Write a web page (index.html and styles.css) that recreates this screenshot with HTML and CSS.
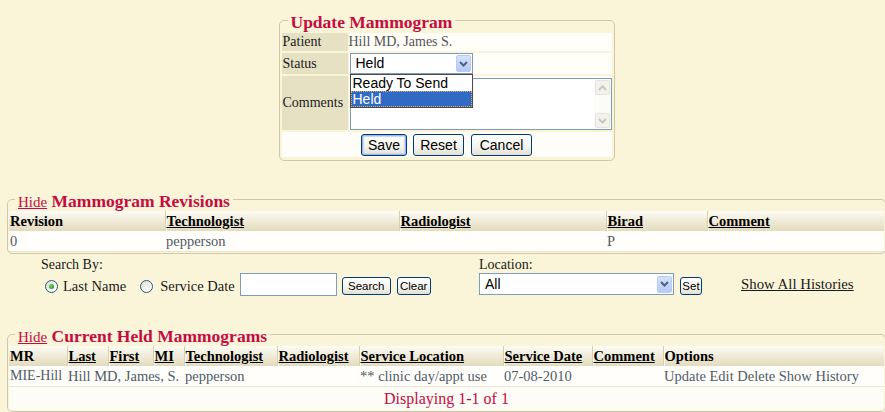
FILE: index.html
```html
<!DOCTYPE html>
<html>
<head>
<meta charset="utf-8">
<title>Mammograms</title>
<link rel="stylesheet" href="styles.css">
</head>
<body>
<div class="page">

  <fieldset class="box update-box">
    <legend class="legend">Update Mammogram</legend>
    <div class="form-grid">
      <div class="lbl">Patient</div>
      <div class="val val-text">Hill MD, James S.</div>

      <div class="lbl">Status</div>
      <div class="val">
        <div class="combo combo-status">
          <span class="combo-text">Held</span>
          <span class="combo-btn"><svg width="9" height="6" viewBox="0 0 9 6"><path d="M1 1l3.5 3.5L8 1" fill="none" stroke="#4d6185" stroke-width="2"/></svg></span>
          <div class="combo-list">
            <div class="opt">Ready To Send</div>
            <div class="opt opt-sel">Held</div>
          </div>
        </div>
      </div>

      <div class="lbl">Comments</div>
      <div class="val">
        <div class="textarea">
          <div class="scrollbar">
            <span class="sb-btn"><svg width="9" height="6" viewBox="0 0 9 6"><path d="M1 5l3.5-3.5L8 5" fill="none" stroke="#c8c7be" stroke-width="2"/></svg></span>
            <span class="sb-btn"><svg width="9" height="6" viewBox="0 0 9 6"><path d="M1 1l3.5 3.5L8 1" fill="none" stroke="#c8c7be" stroke-width="2"/></svg></span>
          </div>
        </div>
      </div>

      <div class="btn-row">
        <button class="btn btn-default btn-save">Save</button>
        <button class="btn btn-reset">Reset</button>
        <button class="btn btn-cancel">Cancel</button>
      </div>
    </div>
  </fieldset>

  <fieldset class="box list-box rev-box">
    <legend class="legend"><a class="hide-link">Hide</a> Mammogram Revisions</legend>
    <table class="grid">
      <colgroup>
        <col class="w156"><col class="w234"><col class="w207"><col class="w101"><col>
      </colgroup>
      <thead>
        <tr>
          <th>Revision</th>
          <th><span class="sort">Technologist</span></th>
          <th><span class="sort">Radiologist</span></th>
          <th><span class="sort">Birad</span></th>
          <th><span class="sort">Comment</span></th>
        </tr>
      </thead>
      <tbody>
        <tr class="data">
          <td>0</td><td>pepperson</td><td></td><td>P</td><td></td>
        </tr>
      </tbody>
    </table>
  </fieldset>

  <div class="search">
    <div class="search-col search-left">
      <div class="search-label">Search By:</div>
      <div class="search-row">
        <label class="radio-opt"><span class="radio checked"></span>Last Name</label>
        <label class="radio-opt radio-opt2"><span class="radio"></span>Service Date</label>
        <span class="textbox"></span>
        <button class="sbtn sbtn-search">Search</button>
        <button class="sbtn sbtn-clear">Clear</button>
      </div>
    </div>
    <div class="search-col search-right">
      <div class="search-label">Location:</div>
      <div class="search-row">
        <div class="combo combo-loc">
          <span class="combo-text">All</span>
          <span class="combo-btn"><svg width="9" height="6" viewBox="0 0 9 6"><path d="M1 1l3.5 3.5L8 1" fill="none" stroke="#4d6185" stroke-width="2"/></svg></span>
        </div>
        <button class="sbtn sbtn-set">Set</button>
      </div>
    </div>
    <a class="show-all">Show All Histories</a>
  </div>

  <fieldset class="box list-box held-box">
    <legend class="legend"><a class="hide-link">Hide</a> Current Held Mammograms</legend>
    <table class="grid">
      <colgroup>
        <col class="w58"><col class="w41"><col class="w45"><col class="w31"><col class="w93"><col class="w82"><col class="w144"><col class="w89"><col class="w71"><col>
      </colgroup>
      <thead>
        <tr>
          <th>MR</th>
          <th><span class="sort">Last</span></th>
          <th><span class="sort">First</span></th>
          <th><span class="sort">MI</span></th>
          <th><span class="sort">Technologist</span></th>
          <th><span class="sort">Radiologist</span></th>
          <th><span class="sort">Service Location</span></th>
          <th><span class="sort">Service Date</span></th>
          <th><span class="sort">Comment</span></th>
          <th>Options</th>
        </tr>
      </thead>
      <tbody>
        <tr class="data">
          <td class="mr">MIE-Hill</td>
          <td colspan="3">Hill MD, James, S.</td>
          <td>pepperson</td>
          <td></td>
          <td>** clinic day/appt use</td>
          <td>07-08-2010</td>
          <td></td>
          <td>Update Edit Delete Show History</td>
        </tr>
        <tr class="foot">
          <td colspan="10">Displaying 1-1 of 1</td>
        </tr>
      </tbody>
    </table>
  </fieldset>

</div>
</body>
</html>
```

FILE: styles.css
```css
html, body {
  margin: 0;
  padding: 0;
  overflow: hidden;
}

body {
  background: #faf4d8;
  font-family: "Liberation Serif", "Times New Roman", serif;
  font-size: 14px;
  color: #1a1a1a;
}

.page {
  margin-left: 7px;
  width: 879px;
}

/* ---------- fieldsets ---------- */
.box {
  border: 1px solid #cfc8ab;
  border-radius: 5px;
  margin: 0;
  min-width: 0;
}

.legend {
  margin-left: 6px;
  padding: 2px 3px 0;
  box-sizing: border-box;
  height: 20px;
  line-height: 20px;
  font-size: 17.5px;
  font-weight: bold;
  color: #c40c42;
  white-space: nowrap;
}

.hide-link {
  font-size: 15px;
  font-weight: normal;
  text-decoration: underline;
  color: #c40c42;
}

/* ---------- update form ---------- */
.update-box {
  width: 336px;
  box-sizing: border-box;
  margin: 10px auto 0;
  padding: 3px 2px 3px;
}

.form-grid {
  display: grid;
  grid-template-columns: 66px 1fr;
  grid-template-rows: 18px 21px 54px 25px;
  gap: 2px 1px;
}

.lbl {
  background: #e7e1c4;
  padding-left: 1px;
  display: flex;
  align-items: center;
  color: #1c1c1c;
}

.val {
  background: #fffef9;
  position: relative;
}

.val-text {
  display: flex;
  align-items: center;
  color: #555;
}

.combo {
  position: relative;
  box-sizing: border-box;
  border: 1px solid #7f9db9;
  background: #fff;
  font-family: "Liberation Sans", Arial, sans-serif;
  font-size: 14px;
  color: #000;
  display: flex;
  align-items: center;
}

.combo-status {
  margin-left: 1px;
  width: 123px;
  height: 21px;
}

.combo-text {
  flex: 1;
  padding-left: 5px;
  line-height: 17px;
}

.combo-btn {
  width: 15px;
  height: 17px;
  margin-right: 1px;
  box-sizing: border-box;
  border: 1px solid #b8cbf5;
  border-radius: 2px;
  background: linear-gradient(#d6e2fd, #b6c9f6);
  display: flex;
  align-items: center;
  justify-content: center;
}

.combo-list {
  position: absolute;
  left: -1px;
  top: 20px;
  width: 123px;
  box-sizing: border-box;
  border: 1px solid #4b4b4b;
  background: #fff;
  z-index: 5;
}

.opt {
  height: 16px;
  line-height: 16px;
  padding-left: 2px;
  white-space: nowrap;
}

.opt-sel {
  background: #316ac5;
  color: #fff;
  outline: 1px dotted #e0b15c;
  outline-offset: -1px;
}

.textarea {
  margin: 2px 0 0 1px;
  height: 52px;
  box-sizing: border-box;
  border: 1px solid #7f9db9;
  background: #fff;
  display: flex;
  justify-content: flex-end;
}

.scrollbar {
  width: 17px;
  background: #fbfbf7;
  display: flex;
  flex-direction: column;
  justify-content: space-between;
  align-items: center;
  padding: 1px 0;
}

.sb-btn {
  width: 15px;
  height: 15px;
  box-sizing: border-box;
  border: 1px solid #e6e5dc;
  border-radius: 2px;
  background: #f3f2ec;
  display: flex;
  align-items: center;
  justify-content: center;
}

.btn-row {
  grid-column: 1 / -1;
  background: #fefdf8;
  display: flex;
  justify-content: center;
  align-items: center;
  gap: 6px;
}

.btn {
  height: 22px;
  box-sizing: border-box;
  border: 1px solid #003c74;
  border-radius: 3px;
  background: linear-gradient(#ffffff, #f4f3ee 60%, #e3e0d3);
  font-family: "Liberation Sans", Arial, sans-serif;
  font-size: 14px;
  color: #000;
  padding: 0;
}

.btn-default {
  box-shadow: inset 0 0 0 1px #9db7e8, inset 0 0 0 2px #c9d8f5;
}

.btn-save { width: 46px; }
.btn-reset { width: 51px; }
.btn-cancel { width: 61px; margin-left: 1px; }

/* ---------- list tables ---------- */
.list-box {
  padding: 2px 1px 1px;
  width: 879px;
  box-sizing: border-box;
}

.rev-box {
  margin-top: 28px;
}

.held-box {
  margin-top: 28px;
}

.grid {
  width: 100%;
  border-collapse: collapse;
  table-layout: fixed;
}

.grid th {
  height: 20px;
  padding: 0 1px;
  text-align: left;
  font-size: 14.5px;
  font-weight: bold;
  color: #000;
  white-space: nowrap;
  overflow: hidden;
  background: linear-gradient(#fdfcf5, #f1ecda 45%, #e3dbbd);
  border-left: 1px solid #d7cfb1;
  box-shadow: inset 1px 0 #fdfcf4;
}

.grid th:first-child {
  border-left: none;
  box-shadow: none;
}

.sort {
  text-decoration: underline;
}

.grid td {
  padding: 0 1px;
  white-space: nowrap;
  overflow: hidden;
}

.data td {
  height: 20px;
  background: #fffefa;
  color: #505b67;
  font-size: 14.5px;
  border-bottom: 1px solid #ebe5cb;
}

.data td.mr {
  font-size: 14px;
}

.foot td {
  height: 23px;
  background: #fdfcf6;
  text-align: center;
  color: #c40c42;
  font-size: 16px;
}

.w156 { width: 156px; }
.w234 { width: 234px; }
.w207 { width: 207px; }
.w101 { width: 101px; }
.w58 { width: 58px; }
.w41 { width: 41px; }
.w45 { width: 45px; }
.w31 { width: 31px; }
.w93 { width: 93px; }
.w82 { width: 82px; }
.w144 { width: 144px; }
.w89 { width: 89px; }
.w71 { width: 71px; }

/* ---------- search ---------- */
.search {
  margin-top: 2px;
  padding-left: 34px;
  display: flex;
  align-items: flex-end;
}

.search-left {
  width: 438px;
}

.search-right {
  width: 262px;
}

.search-label {
  line-height: 16px;
  height: 16px;
  padding-top: 1px;
}

.search-row {
  display: flex;
  align-items: flex-end;
  height: 23px;
}

.radio-opt {
  display: flex;
  align-items: center;
  margin-bottom: 2px;
  line-height: 16px;
  font-size: 14.5px;
}

.radio-opt2 {
  margin-left: 14px;
}

.radio {
  width: 13px;
  height: 13px;
  box-sizing: border-box;
  border: 1px solid #2f5a80;
  border-radius: 50%;
  margin: 0 5px 0 4px;
  background: linear-gradient(135deg, #dcd9cc, #ffffff 80%);
  display: flex;
  align-items: center;
  justify-content: center;
}

.radio-opt2 .radio {
  margin-left: 0;
  margin-right: 7px;
}

.radio.checked::after {
  content: "";
  width: 5px;
  height: 5px;
  border-radius: 50%;
  background: radial-gradient(circle at 40% 40%, #7fd17f, #21a121 70%);
}

.textbox {
  width: 97px;
  height: 23px;
  box-sizing: border-box;
  border: 1px solid #7f9db9;
  background: #fff;
  margin-left: 5px;
}

.sbtn {
  height: 18px;
  box-sizing: border-box;
  border: 1px solid #003c74;
  border-radius: 3px;
  background: linear-gradient(#ffffff, #f4f3ee 60%, #e3e0d3);
  font-family: "Liberation Sans", Arial, sans-serif;
  font-size: 11.5px;
  color: #000;
  padding: 0;
  margin-bottom: 1px;
}

.sbtn-search { width: 49px; margin-left: 5px; }
.sbtn-clear { width: 34px; margin-left: 6px; }
.sbtn-set { width: 22px; margin-left: 6px; }

.combo-loc {
  width: 195px;
  height: 22px;
  margin-bottom: 1px;
}

.show-all {
  text-decoration: underline;
  color: #1a1a1a;
  font-size: 14.8px;
  margin-bottom: 3px;
}
```
